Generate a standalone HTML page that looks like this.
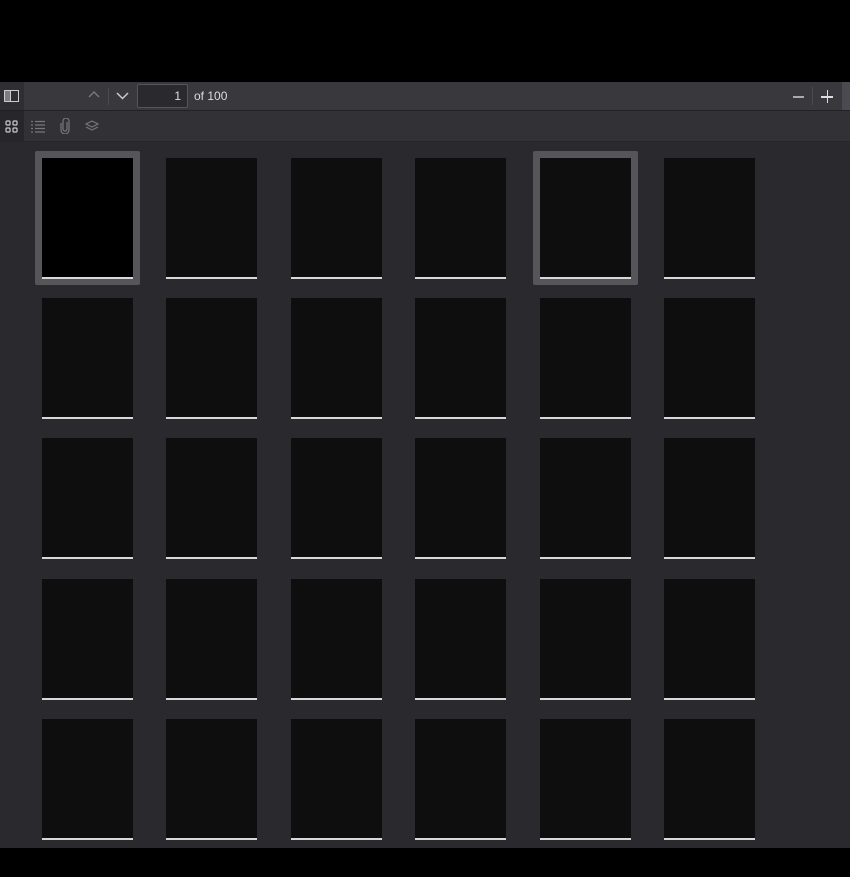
<!DOCTYPE html>
<html><head><meta charset="utf-8"><style>
*{margin:0;padding:0;box-sizing:border-box}
body{width:850px;height:877px;background:#000;position:relative;overflow:hidden;font-family:"Liberation Sans",sans-serif}
.tb1{position:absolute;left:0;top:82px;width:850px;height:29px;background:#38383d;border-bottom:1px solid #222}
.tb2{position:absolute;left:0;top:111px;width:850px;height:31px;background:#313136;border-bottom:1px solid #26262a}
.content{position:absolute;left:0;top:142px;width:850px;height:706px;background:#2a2a2e}
.th{position:absolute;width:91px;height:121px;background:#0e0e0e}
.th::after{content:"";position:absolute;left:0;right:0;bottom:0;height:2px;background:#d8d8d8}
.sel{position:absolute;width:105px;height:134px;background:#55555a;border-radius:2px}
.ic{position:absolute}
</style></head><body>
<div class="tb1">
  <div style="position:absolute;left:0;top:0;width:24px;height:28px;background:#2e2e33"></div>
  <svg class="ic" style="left:4px;top:8px" width="15" height="12"><rect x="0.5" y="0.5" width="14" height="11" fill="none" stroke="#ccc"/><rect x="1" y="1" width="5" height="10" fill="#ccc" opacity=".5"/><line x1="6.5" y1="1" x2="6.5" y2="11" stroke="#ccc"/></svg>
  <svg class="ic" style="left:88px;top:9px" width="12" height="8"><path d="M1 6 L6 1 L11 6" fill="none" stroke="#77777c" stroke-width="1.4"/></svg>
  <div style="position:absolute;left:108px;top:6px;width:1px;height:17px;background:#4a4a50"></div>
  <svg class="ic" style="left:116px;top:10px" width="13" height="8"><path d="M1 1 L6.5 6.5 L12 1" fill="none" stroke="#ccc" stroke-width="1.5"/></svg>
  <div style="position:absolute;left:137px;top:2px;width:51px;height:24px;background:#2a2a2e;border:1px solid #55555a;border-radius:2px;color:#ddd;font-size:12px;text-align:right;padding:4px 6px 0 0">1</div>
  <div style="position:absolute;left:194px;top:7px;color:#ddd;font-size:12px">of 100</div>
  <div style="position:absolute;left:793px;top:14px;width:11px;height:1.5px;background:#aaa"></div>
  <div style="position:absolute;left:812px;top:5px;width:1px;height:18px;background:#4a4a50"></div>
  <div style="position:absolute;left:821px;top:14px;width:12px;height:1.5px;background:#ddd"></div>
  <div style="position:absolute;left:826.5px;top:8px;width:1.5px;height:13px;background:#ddd"></div>
  <div style="position:absolute;left:842px;top:0;width:8px;height:28px;background:#4a4a50"></div>
</div>
<div class="tb2">
  <div style="position:absolute;left:0;top:0;width:24px;height:30px;background:#27272b"></div>
  <svg class="ic" style="left:5px;top:9px" width="13" height="13" fill="none" stroke="#ccc" stroke-width="1.2"><rect x="1" y="1" width="4" height="4" rx="1"/><rect x="8" y="1" width="4" height="4" rx="1"/><rect x="1" y="8" width="4" height="4" rx="1"/><rect x="8" y="8" width="4" height="4" rx="1"/></svg>
  <svg class="ic" style="left:31px;top:9px" width="14" height="13" stroke="#77777c" stroke-width="1.2"><path d="M0 1.5h2M4 1.5h10M0 5h2M4 5h10M0 8.5h2M4 8.5h10M0 12h2M4 12h10"/></svg>
  <svg class="ic" style="left:60px;top:7px" width="10" height="16" fill="none" stroke="#77777c" stroke-width="1.2"><path d="M7 4v7a2 2 0 0 1-4 0V3a3 3 0 0 1 6 0v9a4 4 0 0 1-8 0V5"/></svg>
  <svg class="ic" style="left:85px;top:9px" width="14" height="12" fill="none" stroke="#77777c" stroke-width="1.2"><path d="M7 1L13 4L7 7L1 4Z"/><path d="M1 7L7 10L13 7"/></svg>
</div>
<div class="content">
  <div class="sel" style="left:35px;top:9px"></div>
  <div class="sel" style="left:533px;top:9px"></div>
</div>
<div id="g"></div>
<script>
var xs=[42,166,291,415,540,664],ys=[158,298,438,579,719],h='';
ys.forEach(function(y,r){xs.forEach(function(x,c){h+='<div class="th" style="left:'+x+'px;top:'+y+'px;'+(r==0&&c==0?'background:#000':'')+'"></div>';});});
document.getElementById('g').innerHTML=h;
</script>
</body></html>
